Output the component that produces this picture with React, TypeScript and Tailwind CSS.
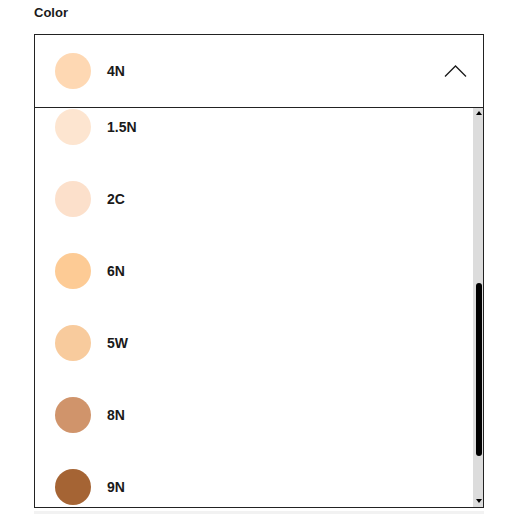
import React from 'react';

const shades = [
  { name: '1.5N', color: '#fde5d0' },
  { name: '2C', color: '#fce0cb' },
  { name: '6N', color: '#fdcb95' },
  { name: '5W', color: '#f8cb9d' },
  { name: '8N', color: '#d0946b' },
  { name: '9N', color: '#a56434' },
];

const App = () => {
  return (
    <div className="w-[507px] h-[526px] bg-white font-['Liberation_Sans',Arial,sans-serif] text-[#1a1a1a]">
      <div className="pl-[34px] pt-[5px]">
        <div className="text-[13px] leading-[16px] font-bold">Color</div>

        <div className="mt-[13px] w-[450px] border border-[#222]">
          {/* selected value */}
          <div className="h-[73px] border-b border-[#222] flex items-center pl-[20px] pr-[16px]">
            <div className="w-[36px] h-[36px] rounded-full bg-[#fed8b3]" />
            <span className="ml-[16px] text-[14px] font-bold">4N</span>
            <div className="flex-1" />
            <svg width="23" height="12" viewBox="0 0 23 12" fill="none">
              <polyline points="1,11.5 11.5,1 22,11.5" stroke="#1a1a1a" strokeWidth="1.3" />
            </svg>
          </div>

          {/* options */}
          <div className="h-[399px] flex">
            <div className="flex-1 overflow-hidden">
              <div className="-mt-[17px]">
                {shades.map((s) => (
                  <div key={s.name} className="h-[72px] flex items-center pl-[20px] gap-[16px]">
                    <div className="w-[36px] h-[36px] rounded-full" style={{ backgroundColor: s.color }} />
                    <span className="text-[14px] font-bold">{s.name}</span>
                  </div>
                ))}
              </div>
            </div>
            <div className="w-[10px] bg-[#dcdcdc] flex flex-col items-center">
              <div className="h-[12px] pt-[3px] pl-[1px]">
                <svg width="6" height="4" viewBox="0 0 6 4">
                  <polygon points="0,4 3,0 6,4" fill="#000" />
                </svg>
              </div>
              <div className="mt-[163px] ml-[1px] w-[6px] h-[173px] rounded-full bg-black" />
              <div className="flex-1" />
              <div className="pb-[4px] pl-[1px]">
                <svg width="6" height="4" viewBox="0 0 6 4">
                  <polygon points="0,0 6,0 3,4" fill="#000" />
                </svg>
              </div>
            </div>
          </div>
        </div>
        <div className="mt-[3px] w-[450px] h-[3px] bg-[#f2f2f2]" />
      </div>
    </div>
  );
};

export default App;
